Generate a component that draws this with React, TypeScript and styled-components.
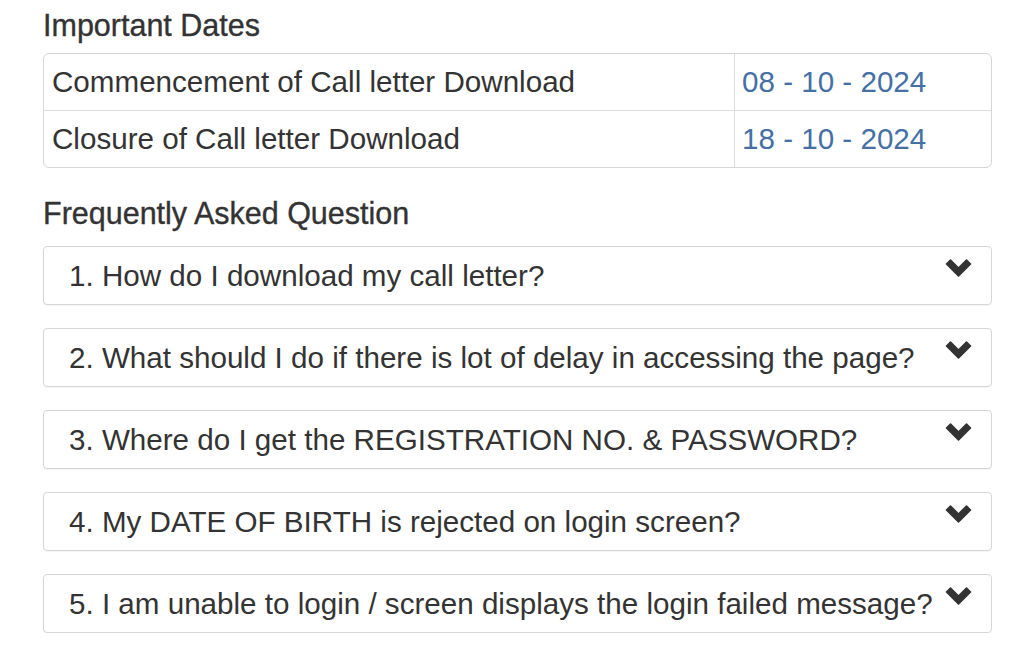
import styled, { createGlobalStyle } from 'styled-components';

const GlobalStyle = createGlobalStyle`
  html, body {
    margin: 0;
    padding: 0;
    background: #ffffff;
  }
  body {
    font-family: "Liberation Sans", Arial, sans-serif;
    color: #333333;
  }
`;

const dates = [
  { label: 'Commencement of Call letter Download', value: '08 - 10 - 2024' },
  { label: 'Closure of Call letter Download', value: '18 - 10 - 2024' },
];

const questions = [
  '1. How do I download my call letter?',
  '2. What should I do if there is lot of delay in accessing the page?',
  '3. Where do I get the REGISTRATION NO. & PASSWORD?',
  '4. My DATE OF BIRTH is rejected on login screen?',
  '5. I am unable to login / screen displays the login failed message?',
];

function Chevron() {
  return (
    <ChevronIcon viewBox="0 0 27 20" aria-hidden="true">
      <path
        d="M1.5 7 L5.5 3 L13.5 11 L21.5 3 L25.5 7 L13.5 19 Z"
        fill="#333333"
        stroke="#333333"
        strokeWidth="1.6"
        strokeLinejoin="round"
      />
    </ChevronIcon>
  );
}

export default function App() {
  return (
    <>
      <GlobalStyle />
      <Page>
        <SectionTitle>Important Dates</SectionTitle>
        <DatesTable>
          <tbody>
            {dates.map((d) => (
              <tr key={d.label}>
                <LabelCell>{d.label}</LabelCell>
                <DateCell>{d.value}</DateCell>
              </tr>
            ))}
          </tbody>
        </DatesTable>

        <SectionTitle $spaced>Frequently Asked Question</SectionTitle>
        <FaqList>
          {questions.map((q) => (
            <FaqItem key={q}>
              <FaqText>{q}</FaqText>
              <Chevron />
            </FaqItem>
          ))}
        </FaqList>
      </Page>
    </>
  );
}

const Page = styled.div`
  width: 949px;
  padding: 8px 0 0 43px;
`;

const SectionTitle = styled.h3<{ $spaced?: boolean }>`
  margin: ${({ $spaced }) => ($spaced ? '28px' : '0')} 0 0 0;
  font-size: 30.5px;
  font-weight: 500;
  line-height: 34px;
  color: #333333;
  -webkit-text-stroke: 0.35px #333333;
`;

const DatesTable = styled.table`
  width: 100%;
  margin-top: 11px;
  border-collapse: separate;
  border-spacing: 0;
  border: 1px solid #d6d6d6;
  border-radius: 6px;
  font-size: 29.6px;
  line-height: 32px;

  tr + tr td {
    border-top: 1px solid #dddddd;
  }
`;

const LabelCell = styled.td`
  padding: 12px 8px;
  height: 32px;
  color: #333333;
  width: 674px;
  border-right: 1px solid #dddddd;
`;

const DateCell = styled.td`
  padding: 12px 7px;
  color: #4470a6;
`;

const FaqList = styled.div`
  display: flex;
  flex-direction: column;
  gap: 23px;
  margin-top: 16px;
`;

const FaqItem = styled.div`
  display: flex;
  justify-content: space-between;
  align-items: flex-start;
  height: 57px;
  border: 1px solid #d6d6d6;
  border-radius: 4px;
  padding: 0 19px 0 25px;
  box-shadow: 0 1px 1px rgba(0, 0, 0, 0.04);
`;

const FaqText = styled.span`
  font-size: 29.6px;
  line-height: 32px;
  padding-top: 13px;
  color: #333333;
  white-space: nowrap;
`;

const ChevronIcon = styled.svg`
  width: 27px;
  height: 20px;
  margin-top: 10px;
  flex-shrink: 0;
`;
